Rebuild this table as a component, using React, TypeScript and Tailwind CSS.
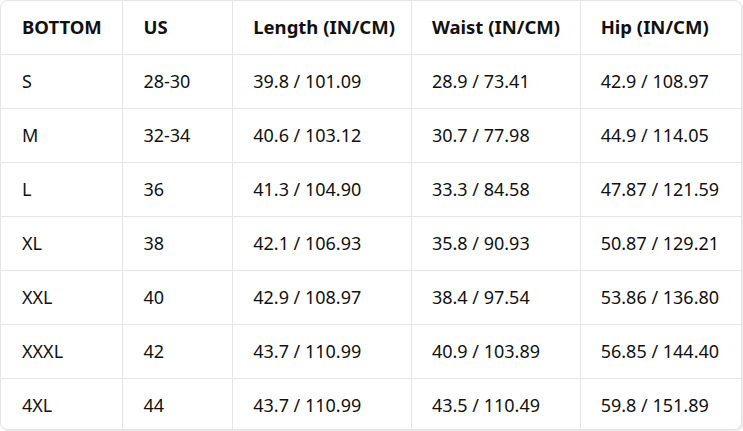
import React from "react";

const rows = [
  ["S", "28-30", "39.8 / 101.09", "28.9 / 73.41", "42.9 / 108.97"],
  ["M", "32-34", "40.6 / 103.12", "30.7 / 77.98", "44.9 / 114.05"],
  ["L", "36", "41.3 / 104.90", "33.3 / 84.58", "47.87 / 121.59"],
  ["XL", "38", "42.1 / 106.93", "35.8 / 90.93", "50.87 / 129.21"],
  ["XXL", "40", "42.9 / 108.97", "38.4 / 97.54", "53.86 / 136.80"],
  ["XXXL", "42", "43.7 / 110.99", "40.9 / 103.89", "56.85 / 144.40"],
  ["4XL", "44", "43.7 / 110.99", "43.5 / 110.49", "59.8 / 151.89"],
];
const head = ["BOTTOM", "US", "Length (IN/CM)", "Waist (IN/CM)", "Hip (IN/CM)"];
const widths = ["w-[122px]", "w-[110px]", "w-[179px]", "w-[169px]", "w-[161px]"];

export default function App() {
  return (
    <div className="bg-white w-[743px] h-[431px]" style={{ fontFamily: '"Noto Sans", "Open Sans", sans-serif' }}>
      <div className="w-[742px] h-[430px] rounded-lg border border-[#e5e5e5] shadow-[1px_1px_2px_rgba(0,0,0,0.12)] overflow-hidden">
        <table className="border-collapse w-full text-[18px] text-[#111]">
          <thead>
            <tr className="h-[53px]">
              {head.map((h, i) => (
                <th
                  key={i}
                  className={`${widths[i]} text-left font-bold text-[18.5px] ${i > 0 ? "pl-[20px] border-l border-[#e5e5e5]" : "pl-[21px]"}`}
                >
                  {h}
                </th>
              ))}
            </tr>
          </thead>
          <tbody>
            {rows.map((r, ri) => (
              <tr key={ri} className="h-[54px] border-t border-[#e5e5e5]">
                {r.map((c, i) => (
                  <td
                    key={i}
                    className={`font-normal ${i > 0 ? "pl-[20px] border-l border-[#e5e5e5]" : "pl-[21px]"}`}
                  >
                    {c}
                  </td>
                ))}
              </tr>
            ))}
          </tbody>
        </table>
      </div>
    </div>
  );
}
